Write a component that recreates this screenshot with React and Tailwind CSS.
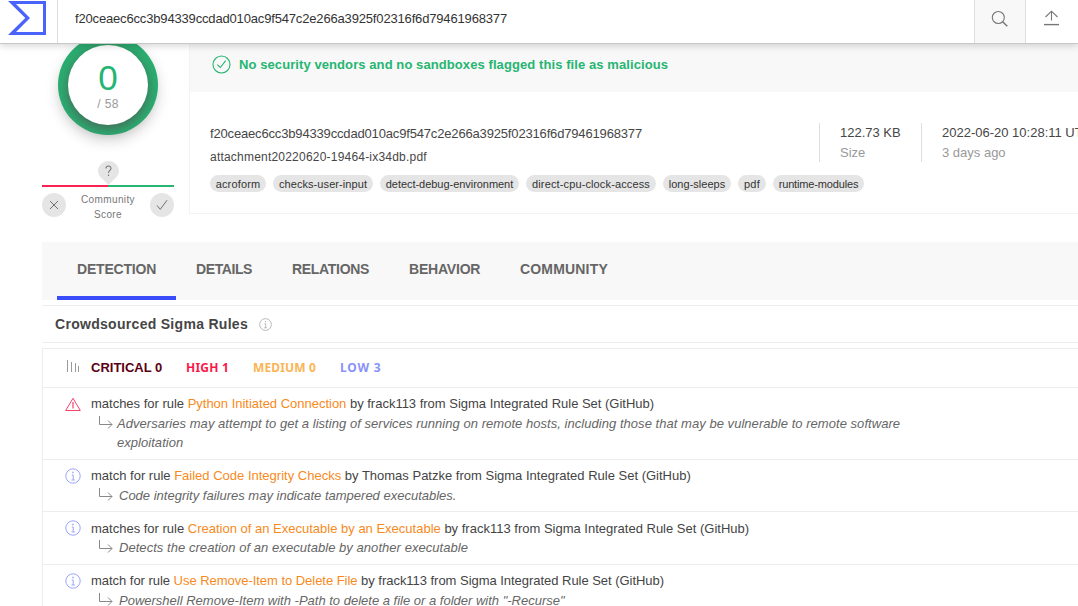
import React from "react";

const HASH = "f20ceaec6cc3b94339ccdad010ac9f547c2e266a3925f02316f6d79461968377";

const TAGS = [
  { label: "acroform", width: "w-14", spacing: "tracking-[0.15px]" },
  { label: "checks-user-input", width: "w-[100px]", spacing: "tracking-[0.08px]" },
  { label: "detect-debug-environment", width: "w-[139px]", spacing: "tracking-[-0.04px]" },
  { label: "direct-cpu-clock-access", width: "w-[130px]", spacing: "tracking-[0.13px]" },
  { label: "long-sleeps", width: "w-[68px]", spacing: "tracking-[0.02px]" },
  { label: "pdf", width: "w-7", spacing: "tracking-[0.3px]" },
  { label: "runtime-modules", width: "w-[91px]", spacing: "tracking-[-0.15px]" },
];

const TABS = [
  { label: "DETECTION", width: "w-[119px]", spacing: "tracking-[-0.2px]", active: true },
  { label: "DETAILS", width: "w-24", spacing: "tracking-[-0.4px]" },
  { label: "RELATIONS", width: "w-[117px]", spacing: "tracking-[-0.3px]" },
  { label: "BEHAVIOR", width: "w-[111px]", spacing: "tracking-[-0.2px]" },
  { label: "COMMUNITY", width: "w-32", spacing: "tracking-[0.18px]" },
];

const RULES = [
  {
    high: true,
    height: "h-[72px]",
    lead: "matches for rule",
    name: "Python Initiated Connection",
    author: "frack113",
    titleSpacing: "tracking-[-0.011px] leading-5",
    descIndent: "ml-[3px]",
    spacing: "tracking-[0.041px]",
    desc: "Adversaries may attempt to get a listing of services running on remote hosts, including those that may be vulnerable to remote software exploitation",
  },
  {
    height: "h-[52px]",
    lead: "match for rule",
    name: "Failed Code Integrity Checks",
    author: "Thomas Patzke",
    titleSpacing: "tracking-[0.003px] leading-5",
    descIndent: "ml-[5px]",
    spacing: "tracking-normal",
    desc: "Code integrity failures may indicate tampered executables.",
  },
  {
    height: "h-[53px]",
    lead: "matches for rule",
    name: "Creation of an Executable by an Executable",
    author: "frack113",
    titleSpacing: "pt-px leading-[19px]",
    descIndent: "ml-[5px]",
    spacing: "tracking-[0.048px]",
    desc: "Detects the creation of an executable by another executable",
  },
  {
    height: "h-[53px]",
    lead: "match for rule",
    name: "Use Remove-Item to Delete File",
    author: "frack113",
    titleSpacing: "tracking-[-0.034px] leading-5",
    descIndent: "ml-[5px]",
    spacing: "tracking-normal",
    desc: 'Powershell Remove-Item with -Path to delete a file or a folder with "-Recurse"',
  },
];

function Logo() {
  return (
    <svg width="38" height="36" viewBox="0 0 38 36" className="shrink-0">
      <path
        fillRule="evenodd"
        fill="#4a63fa"
        d="M0 1H38V35H0L17.3 18ZM8 4L22 18L8 32H35V4Z"
      />
    </svg>
  );
}

function Header() {
  return (
    <header className="relative z-10 flex h-11 shrink-0 border-b border-[#c6cac6] bg-white shadow-[0_2px_7px_rgba(0,0,0,0.16)]">
      <div className="flex w-[58px] shrink-0 items-start border-r border-[#dcdcdc] pl-2">
        <Logo />
      </div>
      <div className="flex-1 pt-[9px] pl-[17px] text-[13px] leading-[19px] tracking-[-0.163px] text-[#333]">{HASH}</div>
      <div className="flex w-[52px] shrink-0 justify-center border-x border-[#dedede] bg-[#f8f8f8]">
        <svg width="18" height="18" viewBox="0 0 18 18" fill="none" stroke="#777" strokeWidth="1.1" className="mt-[10px]">
          <circle cx="7.3" cy="7.5" r="6" />
          <path d="M11.6 11.8L16.3 16.3" strokeWidth="1.5" />
        </svg>
      </div>
      <div className="flex w-[52px] shrink-0 pl-[17px]">
        <svg width="17" height="17" viewBox="0 0 17 17" fill="none" stroke="#777" strokeWidth="1.1" className="mt-[10px]">
          <path d="M8.5 10.5V1.3M2.5 7L8.5 1.2L14.5 7" />
          <path d="M1 14.6H16" strokeWidth="1.4" />
        </svg>
      </div>
    </header>
  );
}

function Score() {
  return (
    <aside className="flex h-[170px] w-[132px] shrink-0 flex-col items-center">
      <div className="-mt-[9px] flex size-[100px] shrink-0 items-center justify-center rounded-full bg-[#2aae70] shadow-[0_6px_14px_rgba(0,0,0,0.16)]">
        <div className="flex size-20 flex-col items-center rounded-full bg-white pt-[13px] shadow-[0_4px_12px_rgba(80,80,80,0.75)]">
          <span className="text-[35px] leading-10 text-[#22b573]">0</span>
          <span className="-mt-[3px] text-[12px] leading-[18px] tracking-[0.4px] text-[#999]">/ 58</span>
        </div>
      </div>
      <svg width="21" height="24" viewBox="0 0 21 24" className="mt-[26px] shrink-0">
        <path fill="#e5e5e5" d="M10.5 0C4.700 0 0 4.600 0 10C0 15.500 5.500 18.500 10.500 24C15.500 18.500 21 15.500 21 10C21 4.600 16.300 0 10.500 0Z" />
        <path d="M8 7.500C8 4.200 13 4.200 13 7.300C13 9.400 10.500 9.300 10.500 12M10.500 13.500V15" fill="none" stroke="#777" strokeWidth="1.100" />
      </svg>
      <div className="flex h-0.5 w-full shrink-0">
        <div className="w-1/2 bg-[#fb2151]" />
        <div className="w-1/2 bg-[#26b572]" />
      </div>
      <div className="mt-1.5 flex w-full items-start justify-between">
        <div className="flex size-6 items-center justify-center rounded-full bg-[#e5e5e5]">
          <svg width="10" height="10" viewBox="0 0 10 10" stroke="#707070" strokeWidth="1">
            <path d="M1 1L9 9M9 1L1 9" />
          </svg>
        </div>
        <div className="-mt-px text-center text-[10px] leading-[15px] tracking-[0.38px] text-[#777]">
          Community
          <br />
          Score
        </div>
        <div className="flex size-6 items-center justify-center rounded-full bg-[#e5e5e5]">
          <svg width="12" height="12" viewBox="0 0 12 12" fill="none" stroke="#707070" strokeWidth="1">
            <path d="M1 6.500L4.300 10.300L11 1.200" />
          </svg>
        </div>
      </div>
    </aside>
  );
}

function Summary() {
  return (
    <section className="ml-[15px] flex h-[170px] min-w-0 flex-1 flex-col border-b border-l border-[#f3f3f3]">
      <div className="flex h-12 shrink-0 items-center bg-[#f8f8f8] pb-[7px] pl-[21px]">
        <svg width="20" height="20" viewBox="0 0 20 20" fill="none" stroke="#26b572" strokeWidth="1.100" className="mr-2">
          <circle cx="10.500" cy="9.500" r="8.500" />
          <path d="M6.300 9.700L9.300 12.500L14.700 5.700" />
        </svg>
        <span className="text-[13px] font-bold tracking-[0.085px] whitespace-nowrap text-[#26b572]">
          No security vendors and no sandboxes flagged this file as malicious
        </span>
      </div>
      <div className="flex pl-5">
        <div className="w-[609px] shrink-0 pt-[30px] text-[#464646]">
          <div className="text-[13px] leading-[23px] tracking-[-0.163px]">{HASH}</div>
          <div className="pt-px text-[12px] leading-[23px] tracking-[0.21px]">attachment20220620-19464-ix34db.pdf</div>
          <div className="mt-1.5 flex gap-[7px]">
            {TAGS.map((t) => (
              <span
                key={t.label}
                className={`flex h-[17px] shrink-0 items-center justify-center rounded-full bg-[#e5e5e5] pt-0.5 text-[11px] leading-none whitespace-nowrap text-[#333] ${t.width} ${t.spacing}`}
              >
                {t.label}
              </span>
            ))}
          </div>
        </div>
        <div className="mt-[31px] flex h-[39px] shrink-0 text-[13px] leading-5 whitespace-nowrap text-[#464646]">
          <div className="w-[102px] shrink-0 border-l border-[#dedede] pl-5">
            <div>122.73 KB</div>
            <div className="text-[#999]">Size</div>
          </div>
          <div className="shrink-0 border-l border-[#dedede] pl-5">
            <div>2022-06-20 10:28:11 UTC</div>
            <div className="text-[#999]">3 days ago</div>
          </div>
        </div>
      </div>
    </section>
  );
}

function Info({ size, color, className }) {
  return (
    <svg width={size} height={size} viewBox="0 0 16 16" fill="none" stroke={color} className={className}>
      <circle cx="8" cy="8" r="7.200" />
      <path d="M6.800 7H8.200V12M6.500 12H9.800" />
      <path d="M7.200 4.500H8.700" strokeWidth="1.300" />
    </svg>
  );
}

function Rule({ rule }) {
  return (
    <div className={`flex shrink-0 border-b border-[#ededed] pt-1.5 pl-[22px] ${rule.height}`}>
      {rule.high ? (
        <svg width="16" height="16" viewBox="0 0 16 16" fill="none" stroke="#f4426a" className="mt-[3px] shrink-0">
          <path d="M8 1.300L15.300 13.500H0.700Z" />
          <path d="M8 5V11.500" strokeWidth="1.200" />
        </svg>
      ) : (
        <Info size={16} color="#9ba4fb" className="mt-0.5 shrink-0" />
      )}
      <div className="ml-2.5 text-[13px] text-[#444]">
        <div className={`whitespace-nowrap ${rule.titleSpacing}`}>
          {rule.lead} <span className="text-[#f78a1d]">{rule.name}</span> by {rule.author} from Sigma Integrated Rule Set (GitHub)
        </div>
        <div className="flex">
          <svg width="15" height="14" viewBox="0 0 15 14" fill="none" stroke="#888" className="mt-0.5 ml-2 shrink-0">
            <path d="M0.500 0V8.500H13M9 4.500L13 8.500L9 12.500" />
          </svg>
          <div className={`w-[800px] leading-[19px] text-[#666] italic ${rule.descIndent} ${rule.spacing}`}>{rule.desc}</div>
        </div>
      </div>
    </div>
  );
}

export default function App() {
  return (
    <div className="flex h-[606px] w-full flex-col overflow-hidden bg-white font-['Liberation_Sans',Arial,sans-serif]">
      <Header />
      <div className="flex shrink-0 pl-[42px]">
        <Score />
        <Summary />
      </div>
      <main className="mt-7 ml-[42px] flex shrink-0 flex-col">
        <nav className="flex h-[58px] bg-[#f8f8f8] pl-[15px]">
          {TABS.map((t) => (
            <div
              key={t.label}
              className={`shrink-0 border-b-4 pt-[17px] pl-5 text-[14px] leading-5 font-bold text-[#666] ${t.width} ${t.spacing} ${t.active ? "border-[#3b4cfb]" : "border-transparent"}`}
            >
              {t.label}
            </div>
          ))}
        </nav>
        <div className="mt-[5px] flex h-[38px] items-center border-y border-[#ededed] pl-[13px]">
          <h2 className="text-[14px] font-bold tracking-[0.295px] text-[#464646]">Crowdsourced Sigma Rules</h2>
          <Info size={13} color="#aaa" className="ml-[11px]" />
        </div>
        <div className="mt-[5px] border-t border-l border-[#ededed]">
          <div className="flex h-[39px] items-center border-b border-[#ededed] pl-[23px] font-bold">
            <svg width="14" height="14" viewBox="0 0 14 14" stroke="#999" className="-mt-1">
              <path d="M1.500 1V13M5.500 3V13M9.500 4V13M12.500 7V13" />
            </svg>
            <span className="ml-[11px] w-[95px] text-[13px] text-[#5b0013]">CRITICAL 0</span>
            <span className="w-[67px] font-['Noto_Sans','Liberation_Sans',sans-serif] text-[12px] tracking-[0.22px] text-[#fb1848]">HIGH 1</span>
            <span className="w-[87px] font-['Noto_Sans','Liberation_Sans',sans-serif] text-[12px] tracking-[0.14px] text-[#fbb454]">MEDIUM 0</span>
            <span className="font-['Noto_Sans','Liberation_Sans',sans-serif] text-[12px] tracking-[0.8px] text-[#8992fb]">LOW 3</span>
          </div>
          {RULES.map((r) => (
            <Rule key={r.name} rule={r} />
          ))}
        </div>
      </main>
    </div>
  );
}
